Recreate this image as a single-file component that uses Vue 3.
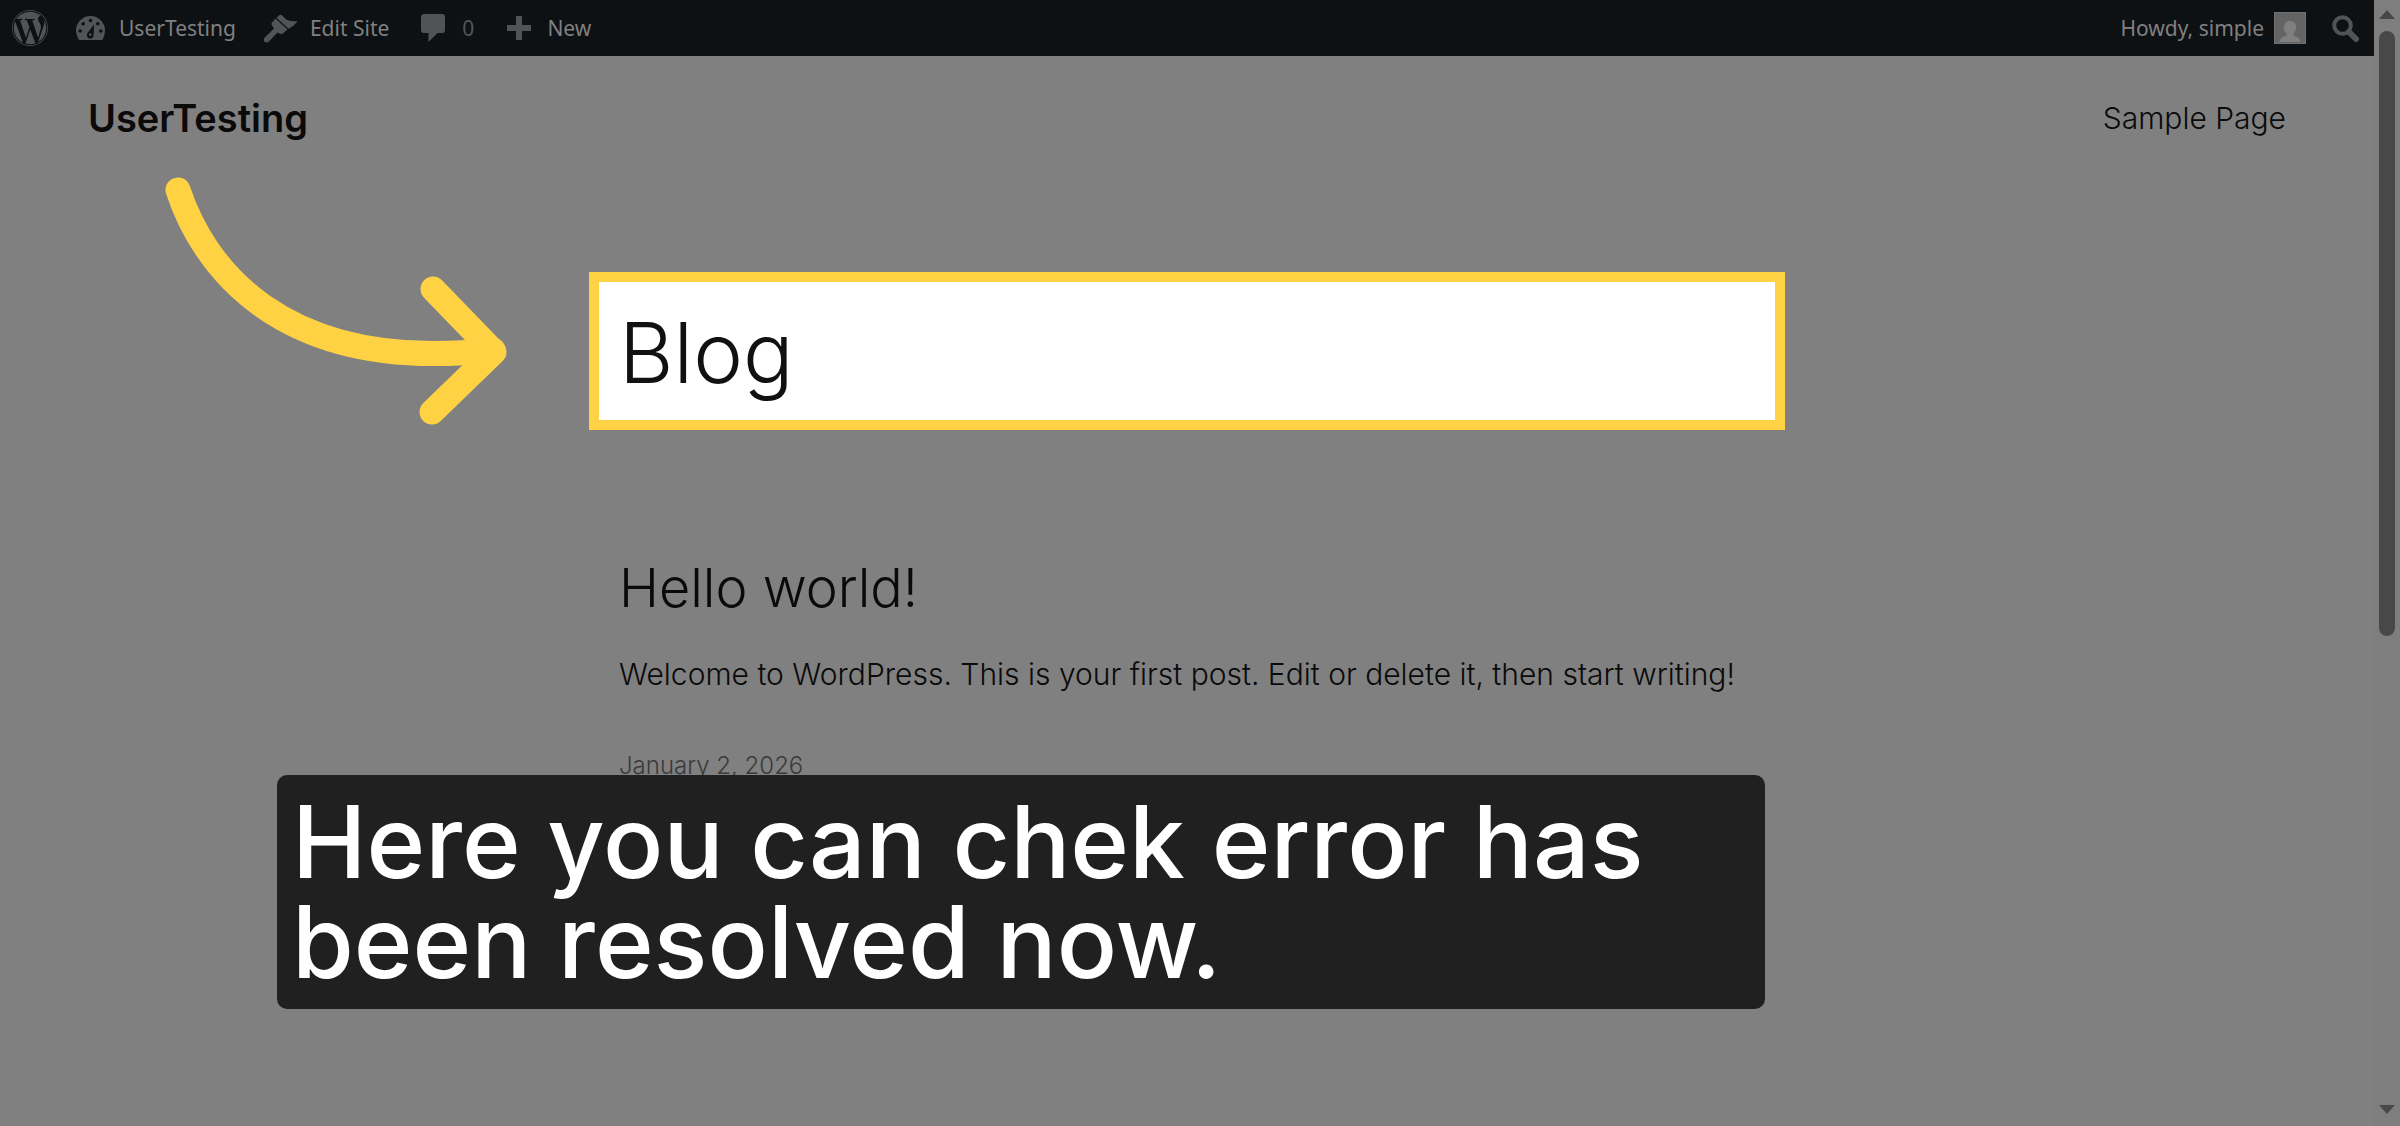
<script setup>
import { ref } from "vue";

const siteName = ref("UserTesting");
const user = ref("simple");
const comments = ref(0);

const post = {
  title: "Hello world!",
  excerpt:
    "Welcome to WordPress. This is your first post. Edit or delete it, then start writing!",
  date: "January 2, 2026",
};
</script>

<template>
  <div class="window">
    <div class="page">
      <!-- Admin bar -->
      <nav class="admin-bar">
        <div class="group">
          <a href="#" class="item" aria-label="About WordPress">
            <svg width="36" height="36" viewBox="0 0 24 24">
              <path
                d="M21.469 6.825c.84 1.537 1.318 3.3 1.318 5.175 0 3.979-2.156 7.456-5.363 9.325l3.295-9.527c.615-1.54.82-2.771.82-3.864 0-.405-.026-.78-.07-1.11m-7.981.105c.647-.03 1.232-.105 1.232-.105.582-.075.514-.93-.067-.899 0 0-1.755.135-2.88.135-1.064 0-2.85-.15-2.85-.15-.585-.03-.661.855-.075.885 0 0 .54.061 1.125.09l1.68 4.605-2.37 7.08L5.354 6.9c.649-.03 1.234-.1 1.234-.1.585-.075.516-.93-.065-.896 0 0-1.746.138-2.874.138-.2 0-.438-.008-.69-.015C4.911 3.15 8.235 1.215 12 1.215c2.809 0 5.365 1.072 7.286 2.833-.046-.003-.091-.009-.141-.009-1.06 0-1.812.923-1.812 1.914 0 .89.513 1.643 1.06 2.531.411.72.89 1.643.89 2.977 0 .915-.354 1.994-.821 3.479l-1.075 3.585-3.9-11.61.001.014zM12 22.784c-1.059 0-2.081-.153-3.048-.437l3.237-9.406 3.315 9.087c.024.053.05.101.078.149-1.12.393-2.325.609-3.582.609M1.211 12c0-1.564.336-3.05.935-4.39L7.29 21.709C3.694 19.96 1.212 16.271 1.211 12M12 0C5.385 0 0 5.385 0 12s5.385 12 12 12 12-5.385 12-12S18.615 0 12 0m0 23.55C5.63 23.55.45 18.37.45 12S5.63.45 12 .45 23.55 5.63 23.55 12 18.37 23.55 12 23.55"
              />
            </svg>
          </a>
          <a href="#" class="item">
            <svg width="30" height="24" viewBox="0 0 30 24">
              <path
                d="M3 24Q0 19 0 14.5A14.5 14.5 0 0 1 29 14.5Q29 19 26.500 24Z"
              />
              <g class="cut">
                <circle cx="14.500" cy="4.500" r="1.800" />
                <circle cx="7.200" cy="7.800" r="1.800" />
                <circle cx="21.800" cy="7.800" r="1.800" />
                <circle cx="4.200" cy="15" r="1.800" />
                <circle cx="24.800" cy="15" r="1.800" />
                <path d="M18 8.500L17.600 19A3.400 3.400 0 1 1 11.600 17Z" />
              </g>
              <circle cx="14.300" cy="18.600" r="1.300" />
            </svg>
            {{ siteName }}
          </a>
          <a href="#" class="item">
            <svg width="33" height="29" viewBox="1 0 33 29">
              <path
                d="M12.500 4.500L9 8.500Q8 10 9 11.500L11 14.500L1.800 23.500Q0 26 1.500 27.800Q3.500 29.500 6 27.500L14.500 18.500L17.500 20Q19 20.600 20.500 19L24.500 15.500Z"
              />
              <path
                d="M13.500 3.700L16.500 1Q18 .2 19.300 1.600L23.500 5.800Q28.500 8 34.800 6.800Q31.500 12 25.500 14.700Z"
              />
            </svg>
            Edit Site
          </a>
          <a href="#" class="item muted">
            <svg width="32" height="28" viewBox="-4 0 32 28">
              <path
                d="M3 0H21Q24 0 24 3V16Q24 19 21 19H16.500L7.500 28V19H3Q0 19 0 16V3Q0 0 3 0Z"
              />
            </svg>
            {{ comments }}
          </a>
          <a href="#" class="item">
            <svg width="32" height="24" viewBox="-5 0 32 24">
              <path d="M9 0H15V9H24V15H15V24H9V15H0V9H9Z" />
            </svg>
            New
          </a>
        </div>
        <div class="group right">
          <a href="#" class="item account">
            Howdy, {{ user }}
            <svg class="avatar" width="32" height="32" viewBox="0 0 32 32">
              <rect class="frame" width="32" height="32" />
              <rect class="back" x="1" y="1" width="30" height="30" />
              <path
                class="person"
                d="M16 9C20.500 9 22.500 12.500 22 16.500C21.700 19 20.500 20.500 19.500 21.500V23.500C23 24.500 26 26 26.500 30H5.500C6 26 9 24.500 12.500 23.500V21.500C11.500 20.500 10.300 19 10 16.500C9.500 12.500 11.500 9 16 9Z"
              />
            </svg>
          </a>
          <button type="button" class="search" aria-label="Search">
            <svg width="27" height="27" viewBox="0 0 27 27">
              <circle cx="10.500" cy="10.500" r="8.300" />
              <path d="M17 17L24 24" />
            </svg>
          </button>
        </div>
      </nav>

      <!-- Site header -->
      <header class="site-header">
        <a href="#" class="site-title">{{ siteName }}</a>
        <a href="#" class="nav-link">Sample Page</a>
      </header>

      <main>
        <div class="highlight">
          <h1>Blog</h1>
          <svg class="arrow" width="400" height="290" viewBox="0 0 400 290">
            <path d="M38 30C62 103 138 215 353 190" />
            <path d="M293 129L354 192L292 252" />
          </svg>
        </div>

        <article>
          <h2>
            <a href="#">{{ post.title }}</a>
          </h2>
          <p>{{ post.excerpt }}</p>
          <a href="#" class="date">{{ post.date }}</a>
        </article>
      </main>

      <div class="caption">Here you can chek error has been resolved now.</div>
    </div>

    <!-- Scrollbar -->
    <div class="scrollbar">
      <svg width="16" height="9" viewBox="0 0 16 9">
        <path d="M8 0L16 9H0Z" />
      </svg>
      <div class="track">
        <div class="thumb"></div>
      </div>
      <svg width="16" height="9" viewBox="0 0 16 9">
        <path d="M0 0H16L8 9Z" />
      </svg>
    </div>
  </div>
</template>

<style>
body {
  background: #808080;
}
</style>

<style scoped>
.window {
  display: flex;
  min-height: 100vh;
  background: #808080;
  font-family: Inter, "Liberation Sans", sans-serif;
  font-weight: 300;
  color: #0a0a0a;
}
a {
  color: inherit;
  text-decoration: none;
}
.page {
  flex: 1;
  position: relative;
}

/* admin bar */
.admin-bar {
  display: flex;
  justify-content: space-between;
  height: 56px;
  padding: 0 15px 0 12px;
  background: #0e1114;
  color: #808081;
  font-family: "Noto Sans", "Open Sans", sans-serif;
  font-size: 21px;
  font-weight: 400;
}
.group {
  display: flex;
  align-items: center;
  gap: 28px;
}
.right {
  gap: 26px;
}
.item {
  display: flex;
  align-items: center;
  gap: 13px;
}
.item svg {
  fill: #515456;
}
.item .cut {
  fill: #0e1114;
}
.muted {
  color: #535557;
}
.account {
  gap: 10px;
}
.avatar .frame {
  fill: #707070;
}
.avatar .back {
  fill: #646464;
}
.avatar .person {
  fill: #7f7f7f;
}
.search {
  display: flex;
  padding: 0;
  border: 0;
  background: none;
}
.search svg {
  fill: none;
  stroke: #515456;
  stroke-width: 4;
  stroke-linecap: round;
}
.search path {
  stroke-width: 6;
}

/* site header */
.site-header {
  display: flex;
  justify-content: space-between;
  align-items: center;
  height: 124px;
  padding: 0 88px;
}
.site-title {
  font-size: 38px;
  font-weight: 600;
}
.nav-link {
  font-size: 30px;
}

/* content */
main {
  width: 1196px;
  max-width: 100%;
  margin: 92px auto 0;
}
.highlight {
  position: relative;
  box-sizing: border-box;
  height: 158px;
  padding: 0 20px;
  border: 10px solid #ffd243;
  background: #fff;
}
h1 {
  margin: 0;
  color: #111;
  font-size: 84px;
  font-weight: 300;
  line-height: 142px;
}
.arrow {
  position: absolute;
  left: -459px;
  top: -122px;
  fill: none;
  stroke: #ffd243;
  stroke-width: 25;
  stroke-linecap: round;
  stroke-linejoin: round;
}
article {
  padding: 124px 30px 0;
}
h2 {
  margin: 0;
  font-size: 54px;
  font-weight: 300;
  line-height: 68px;
}
p {
  margin: 28px 0 48px;
  font-size: 30px;
  line-height: 48px;
}
.date {
  display: block;
  color: #3a3a3a;
  font-size: 24px;
  line-height: 40px;
}

/* caption over the page */
.caption {
  position: absolute;
  left: 277px;
  bottom: 117px;
  box-sizing: border-box;
  width: 1488px;
  padding: 17px 15px;
  border-radius: 10px;
  background: rgba(30, 30, 30, 0.98);
  color: #fff;
  font-size: 100px;
  font-weight: 500;
  line-height: 100px;
}

/* scrollbar */
.scrollbar {
  display: flex;
  flex-direction: column;
  align-items: center;
  box-sizing: border-box;
  width: 26px;
  padding: 10px 0 12px;
  background: #7e7e7e;
}
.scrollbar svg {
  fill: #484848;
}
.track {
  flex: 1;
  padding: 12px 0;
}
.thumb {
  width: 16px;
  height: 57%;
  border-radius: 8px;
  background: #484848;
}
</style>
